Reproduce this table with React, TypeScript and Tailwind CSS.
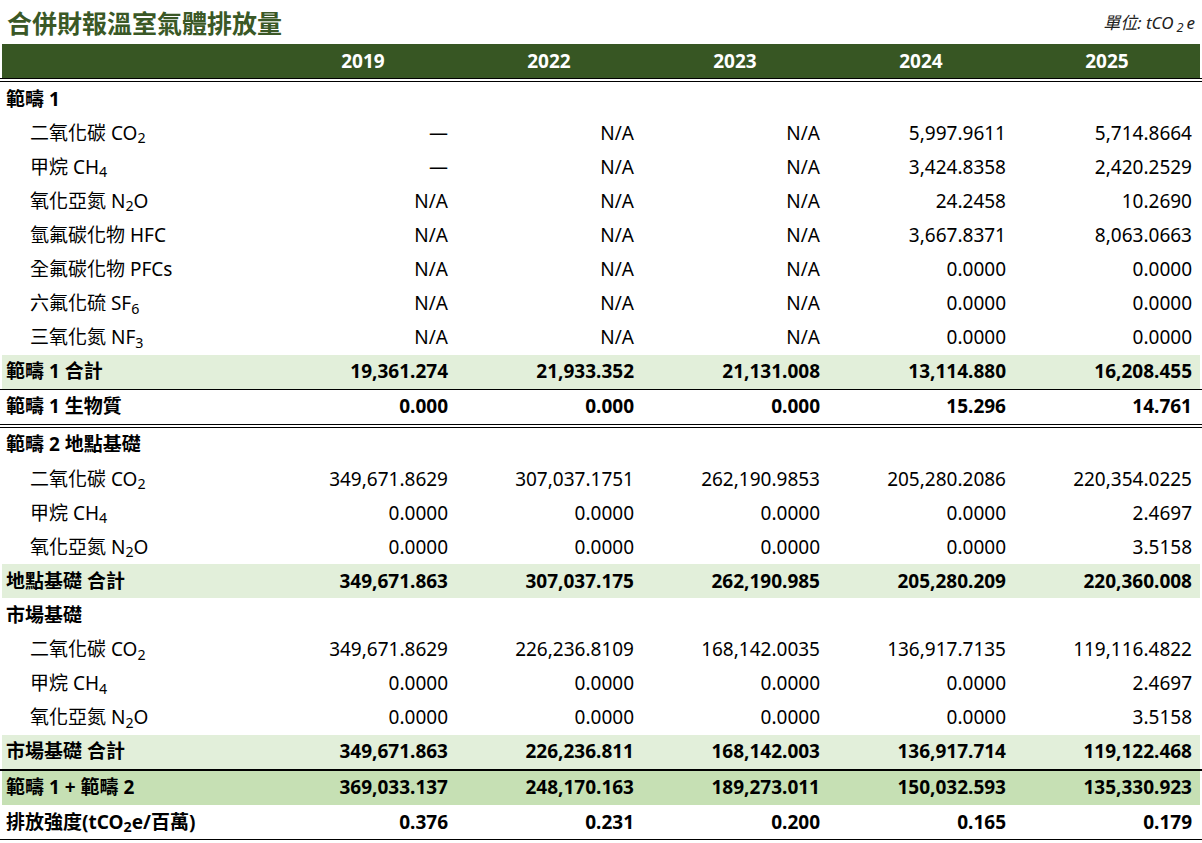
import React from "react";

const YEARS = ["2019", "2022", "2023", "2024", "2025"];

type Row = {
  label: React.ReactNode;
  values?: string[];
  kind: "section" | "item" | "total" | "plain" | "grand";
  border?: "single" | "double" | "thick";
};

const NA3 = ["N/A", "N/A", "N/A"];
const Z4 = ["0.0000", "0.0000", "0.0000", "0.0000"];

const ROWS: Row[] = [
  { label: "範疇 1", kind: "section" },
  { label: <>二氧化碳 CO<sub>2</sub></>, kind: "item", values: ["—", "N/A", "N/A", "5,997.9611", "5,714.8664"] },
  { label: <>甲烷 CH<sub>4</sub></>, kind: "item", values: ["—", "N/A", "N/A", "3,424.8358", "2,420.2529"] },
  { label: <>氧化亞氮 N<sub>2</sub>O</>, kind: "item", values: [...NA3, "24.2458", "10.2690"] },
  { label: "氫氟碳化物 HFC", kind: "item", values: [...NA3, "3,667.8371", "8,063.0663"] },
  { label: "全氟碳化物 PFCs", kind: "item", values: [...NA3, "0.0000", "0.0000"] },
  { label: <>六氟化硫 SF<sub>6</sub></>, kind: "item", values: [...NA3, "0.0000", "0.0000"] },
  { label: <>三氧化氮 NF<sub>3</sub></>, kind: "item", values: [...NA3, "0.0000", "0.0000"] },
  {
    label: "範疇 1 合計",
    kind: "total",
    border: "single",
    values: ["19,361.274", "21,933.352", "21,131.008", "13,114.880", "16,208.455"],
  },
  {
    label: "範疇 1 生物質",
    kind: "plain",
    border: "double",
    values: ["0.000", "0.000", "0.000", "15.296", "14.761"],
  },
  { label: "範疇 2 地點基礎", kind: "section" },
  {
    label: <>二氧化碳 CO<sub>2</sub></>,
    kind: "item",
    values: ["349,671.8629", "307,037.1751", "262,190.9853", "205,280.2086", "220,354.0225"],
  },
  { label: <>甲烷 CH<sub>4</sub></>, kind: "item", values: [...Z4, "2.4697"] },
  { label: <>氧化亞氮 N<sub>2</sub>O</>, kind: "item", values: [...Z4, "3.5158"] },
  {
    label: "地點基礎 合計",
    kind: "total",
    values: ["349,671.863", "307,037.175", "262,190.985", "205,280.209", "220,360.008"],
  },
  { label: "市場基礎", kind: "section" },
  {
    label: <>二氧化碳 CO<sub>2</sub></>,
    kind: "item",
    values: ["349,671.8629", "226,236.8109", "168,142.0035", "136,917.7135", "119,116.4822"],
  },
  { label: <>甲烷 CH<sub>4</sub></>, kind: "item", values: [...Z4, "2.4697"] },
  { label: <>氧化亞氮 N<sub>2</sub>O</>, kind: "item", values: [...Z4, "3.5158"] },
  {
    label: "市場基礎 合計",
    kind: "total",
    border: "thick",
    values: ["349,671.863", "226,236.811", "168,142.003", "136,917.714", "119,122.468"],
  },
  {
    label: "範疇 1 + 範疇 2",
    kind: "grand",
    values: ["369,033.137", "248,170.163", "189,273.011", "150,032.593", "135,330.923"],
  },
  {
    label: <>排放強度(tCO<sub>2</sub>e/百萬)</>,
    kind: "plain",
    border: "single",
    values: ["0.376", "0.231", "0.200", "0.165", "0.179"],
  },
];

function TableRow({ row }: { row: Row }) {
  const bold = row.kind !== "item";
  const bg =
    row.kind === "total" ? "bg-[#e2efda]" : row.kind === "grand" ? "bg-[#c6e0b4]" : "";
  const border =
    row.border === "single"
      ? "border-b border-black"
      : row.border === "double"
      ? "border-b-4 border-double border-black"
      : row.border === "thick"
      ? "border-b-2 border-black"
      : "";

  return (
    <div className={border}>
      <div className={`mx-[2px] grid h-[34.1px] grid-cols-[268px_repeat(5,186px)] items-center ${bg} ${bold ? "font-bold" : ""}`}>
        <div className={row.kind === "item" ? "pl-[28px]" : "pl-[4px]"}>{row.label}</div>
        {row.values?.map((v, i) => (
          <div key={i} className="pr-[8px] text-right">
            {v}
          </div>
        ))}
      </div>
    </div>
  );
}

export default function App() {
  return (
    <div className="w-[1202px] bg-white text-[19px] leading-none text-black [font-family:'Noto_Sans','Noto_Sans_CJK_TC',sans-serif]">
      <div className="flex h-[44px] items-center justify-between pl-[7px] pr-[7px]">
        <h1 className="text-[25px] font-bold text-[#3a5826] [font-family:'Noto_Sans_CJK_TC',sans-serif]">
          合併財報溫室氣體排放量
        </h1>
        <div className="text-[17px] italic text-[#222]">
          單位: tCO<sub className="mx-[3px]">2</sub>e
        </div>
      </div>

      <div className="border-b-4 border-double border-black">
        <div className="mx-[2px] grid h-[34px] grid-cols-[268px_repeat(5,186px)] items-center bg-[#375623] font-bold text-white">
          <div />
          {YEARS.map((y) => (
            <div key={y} className="text-center">
              {y}
            </div>
          ))}
        </div>
      </div>

      {ROWS.map((row, i) => (
        <TableRow key={i} row={row} />
      ))}
    </div>
  );
}
